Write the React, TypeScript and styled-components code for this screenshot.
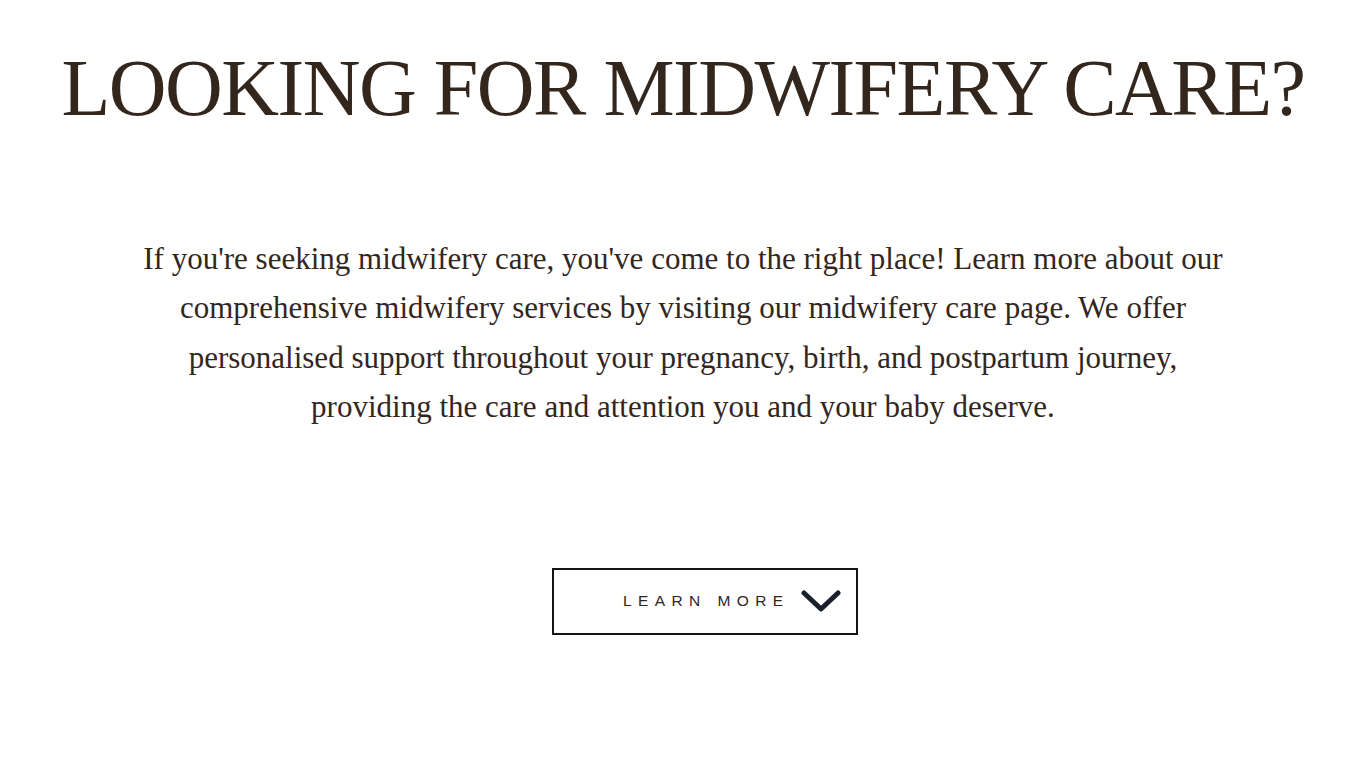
import React from "react";
import styled, { createGlobalStyle } from "styled-components";

const Global = createGlobalStyle`
  html, body { margin: 0; padding: 0; background: #ffffff; }
`;

const Page = styled.main`
  display: flex;
  flex-direction: column;
  align-items: center;
  padding-top: 48px;
  color: #33261d;
`;

const Title = styled.h1`
  margin: 0;
  font-family: "Liberation Serif", serif;
  font-weight: 400;
  font-size: 80px;
  line-height: 80px;
  letter-spacing: -1.5px;
  text-align: center;
  white-space: nowrap;
`;

const Lead = styled.p`
  margin: 106px 0 0;
  font-family: "Liberation Serif", serif;
  font-size: 31px;
  line-height: 49.4px;
  text-align: center;
  white-space: nowrap;
`;

const Button = styled.a`
  margin: 136px 0 0 43px;
  box-sizing: border-box;
  width: 306px;
  height: 67px;
  border: 2px solid #141414;
  display: flex;
  align-items: center;
  justify-content: flex-end;
  gap: 11px;
  padding-right: 15px;
  text-decoration: none;
  cursor: pointer;
`;

const Label = styled.span`
  font-family: "Liberation Sans", sans-serif;
  font-size: 15.5px;
  letter-spacing: 6.4px;
  color: #33261d;
`;

const Chevron = () => (
  <svg width="40" height="22" viewBox="0 0 40 22" fill="none">
    <path d="M3 3 L20 19 L37 3" stroke="#19202b" strokeWidth="5" strokeLinecap="round" strokeLinejoin="round" />
  </svg>
);

export default function App() {
  return (
    <>
      <Global />
      <Page>
        <Title>LOOKING FOR MIDWIFERY CARE?</Title>
        <Lead>
          If you're seeking midwifery care, you've come to the right place! Learn more about our
          <br />
          comprehensive midwifery services by visiting our midwifery care page. We offer
          <br />
          personalised support throughout your pregnancy, birth, and postpartum journey,
          <br />
          providing the care and attention you and your baby deserve.
        </Lead>
        <Button>
          <Label>LEARN MORE</Label>
          <Chevron />
        </Button>
      </Page>
    </>
  );
}
